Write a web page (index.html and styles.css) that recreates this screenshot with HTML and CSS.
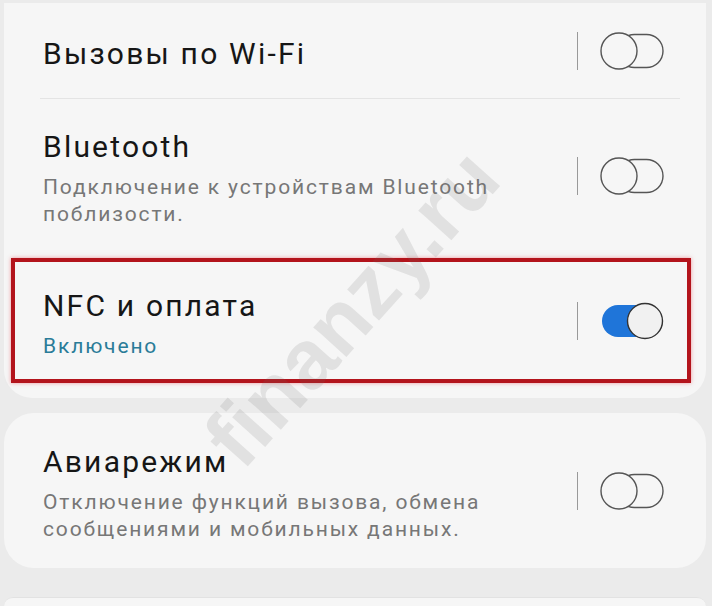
FILE: index.html
```html
<!DOCTYPE html>
<html lang="ru">
<head>
  <meta charset="UTF-8" />
  <meta name="viewport" content="width=device-width, initial-scale=1.0"/>
  <title>Подключения</title>
  <link rel="stylesheet" href="styles.css">
</head>
<body>

  <div class="card card-top">
    <div class="row row-single">
      <div class="texts">
        <div class="title">Вызовы по Wi-Fi</div>
      </div>
      <span class="divider"></span>
      <svg class="toggle" width="64" height="38" viewBox="0 0 64 38">
        <rect x="18" y="2.5" width="45" height="33" rx="16.5" fill="none" stroke="#555" stroke-width="1.4"/>
        <circle cx="19" cy="19" r="18" fill="#f6f6f6" stroke="#555" stroke-width="1.4"/>
      </svg>
    </div>

    <div class="sep"></div>

    <div class="row row-bt">
      <div class="texts">
        <div class="title">Bluetooth</div>
        <div class="sub">Подключение к устройствам Bluetooth поблизости.</div>
      </div>
      <span class="divider"></span>
      <svg class="toggle" width="64" height="38" viewBox="0 0 64 38">
        <rect x="18" y="2.5" width="45" height="33" rx="16.5" fill="none" stroke="#555" stroke-width="1.4"/>
        <circle cx="19" cy="19" r="18" fill="#f6f6f6" stroke="#555" stroke-width="1.4"/>
      </svg>
    </div>

    <div class="row highlight">
      <div class="texts">
        <div class="title">NFC и оплата</div>
        <div class="sub on">Включено</div>
      </div>
      <span class="divider"></span>
      <svg class="toggle" width="64" height="38" viewBox="0 0 64 38">
        <rect x="2" y="3" width="50" height="32" rx="16" fill="#1f75d9"/>
        <circle cx="45" cy="19" r="17.5" fill="#f1f1f1" stroke="#333" stroke-width="1.4"/>
      </svg>
    </div>
  </div>

  <div class="card card-mid">
    <div class="row">
      <div class="texts">
        <div class="title">Авиарежим</div>
        <div class="sub">Отключение функций вызова, обмена сообщениями и мобильных данных.</div>
      </div>
      <span class="divider"></span>
      <svg class="toggle" width="64" height="38" viewBox="0 0 64 38">
        <rect x="18" y="2.5" width="45" height="33" rx="16.5" fill="none" stroke="#555" stroke-width="1.4"/>
        <circle cx="19" cy="19" r="18" fill="#f6f6f6" stroke="#555" stroke-width="1.4"/>
      </svg>
    </div>
  </div>

  <div class="card card-bottom"></div>

  <div class="watermark">finanzy.ru</div>

</body>
</html>
```

FILE: styles.css
```css
html {
  height: 606px;
  overflow: hidden;
}

body {
  font-family: Roboto, 'Noto Sans', sans-serif;
  background-color: #ebebeb;
  margin: 0;
  padding: 3px 0 0;
  box-sizing: border-box;
  height: 606px;
  overflow: hidden;
  position: relative;
}

.card {
  background-color: #f6f6f6;
  margin: 0 6px 0 4px;
}

.card-top {
  border-radius: 0 0 28px 28px;
  padding-bottom: 15px;
}

.card-mid {
  margin-top: 15px;
  border-radius: 30px;
  height: 155px;
  display: flex;
  flex-direction: column;
  justify-content: center;
}

.card-bottom {
  margin-top: 29px;
  border-radius: 30px 30px 0 0;
  border-top: 1px solid #e2e2e2;
  height: 8px;
}

.row {
  display: flex;
  align-items: center;
  padding: 0 42px 0 39px;
}

.row-single {
  height: 95px;
}

.row-bt {
  height: 153px;
}

.texts {
  flex: 1;
  padding-top: 6px;
}

.title {
  font-size: 30px;
  line-height: 36px;
  color: #161616;
  letter-spacing: 2.2px;
}

.sub {
  font-size: 21px;
  line-height: 27px;
  color: #777;
  letter-spacing: 1.85px;
  margin-top: 9px;
  max-width: 500px;
}

.sub.on {
  color: #2a7c98;
}

.sep {
  height: 1px;
  background-color: #e4e4e4;
  margin: 0 26px 0 36px;
}

.divider {
  width: 1px;
  height: 38px;
  background-color: #999;
  margin-right: 22px;
}

.toggle {
  display: block;
}

.highlight {
  margin: 6px 15px 0 7px;
  height: 117px;
  border: 4px solid #b3141c;
  box-shadow: 0 0 4px rgba(230, 70, 80, 0.55);
  padding: 0 23px 0 28px;
}

.watermark {
  position: absolute;
  left: 352px;
  top: 308px;
  transform: translate(-50%, -50%) rotate(-48deg);
  font-family: 'Liberation Sans', Arial, sans-serif;
  font-weight: bold;
  font-size: 84px;
  color: rgba(110, 110, 110, 0.15);
  white-space: nowrap;
  pointer-events: none;
}
```
